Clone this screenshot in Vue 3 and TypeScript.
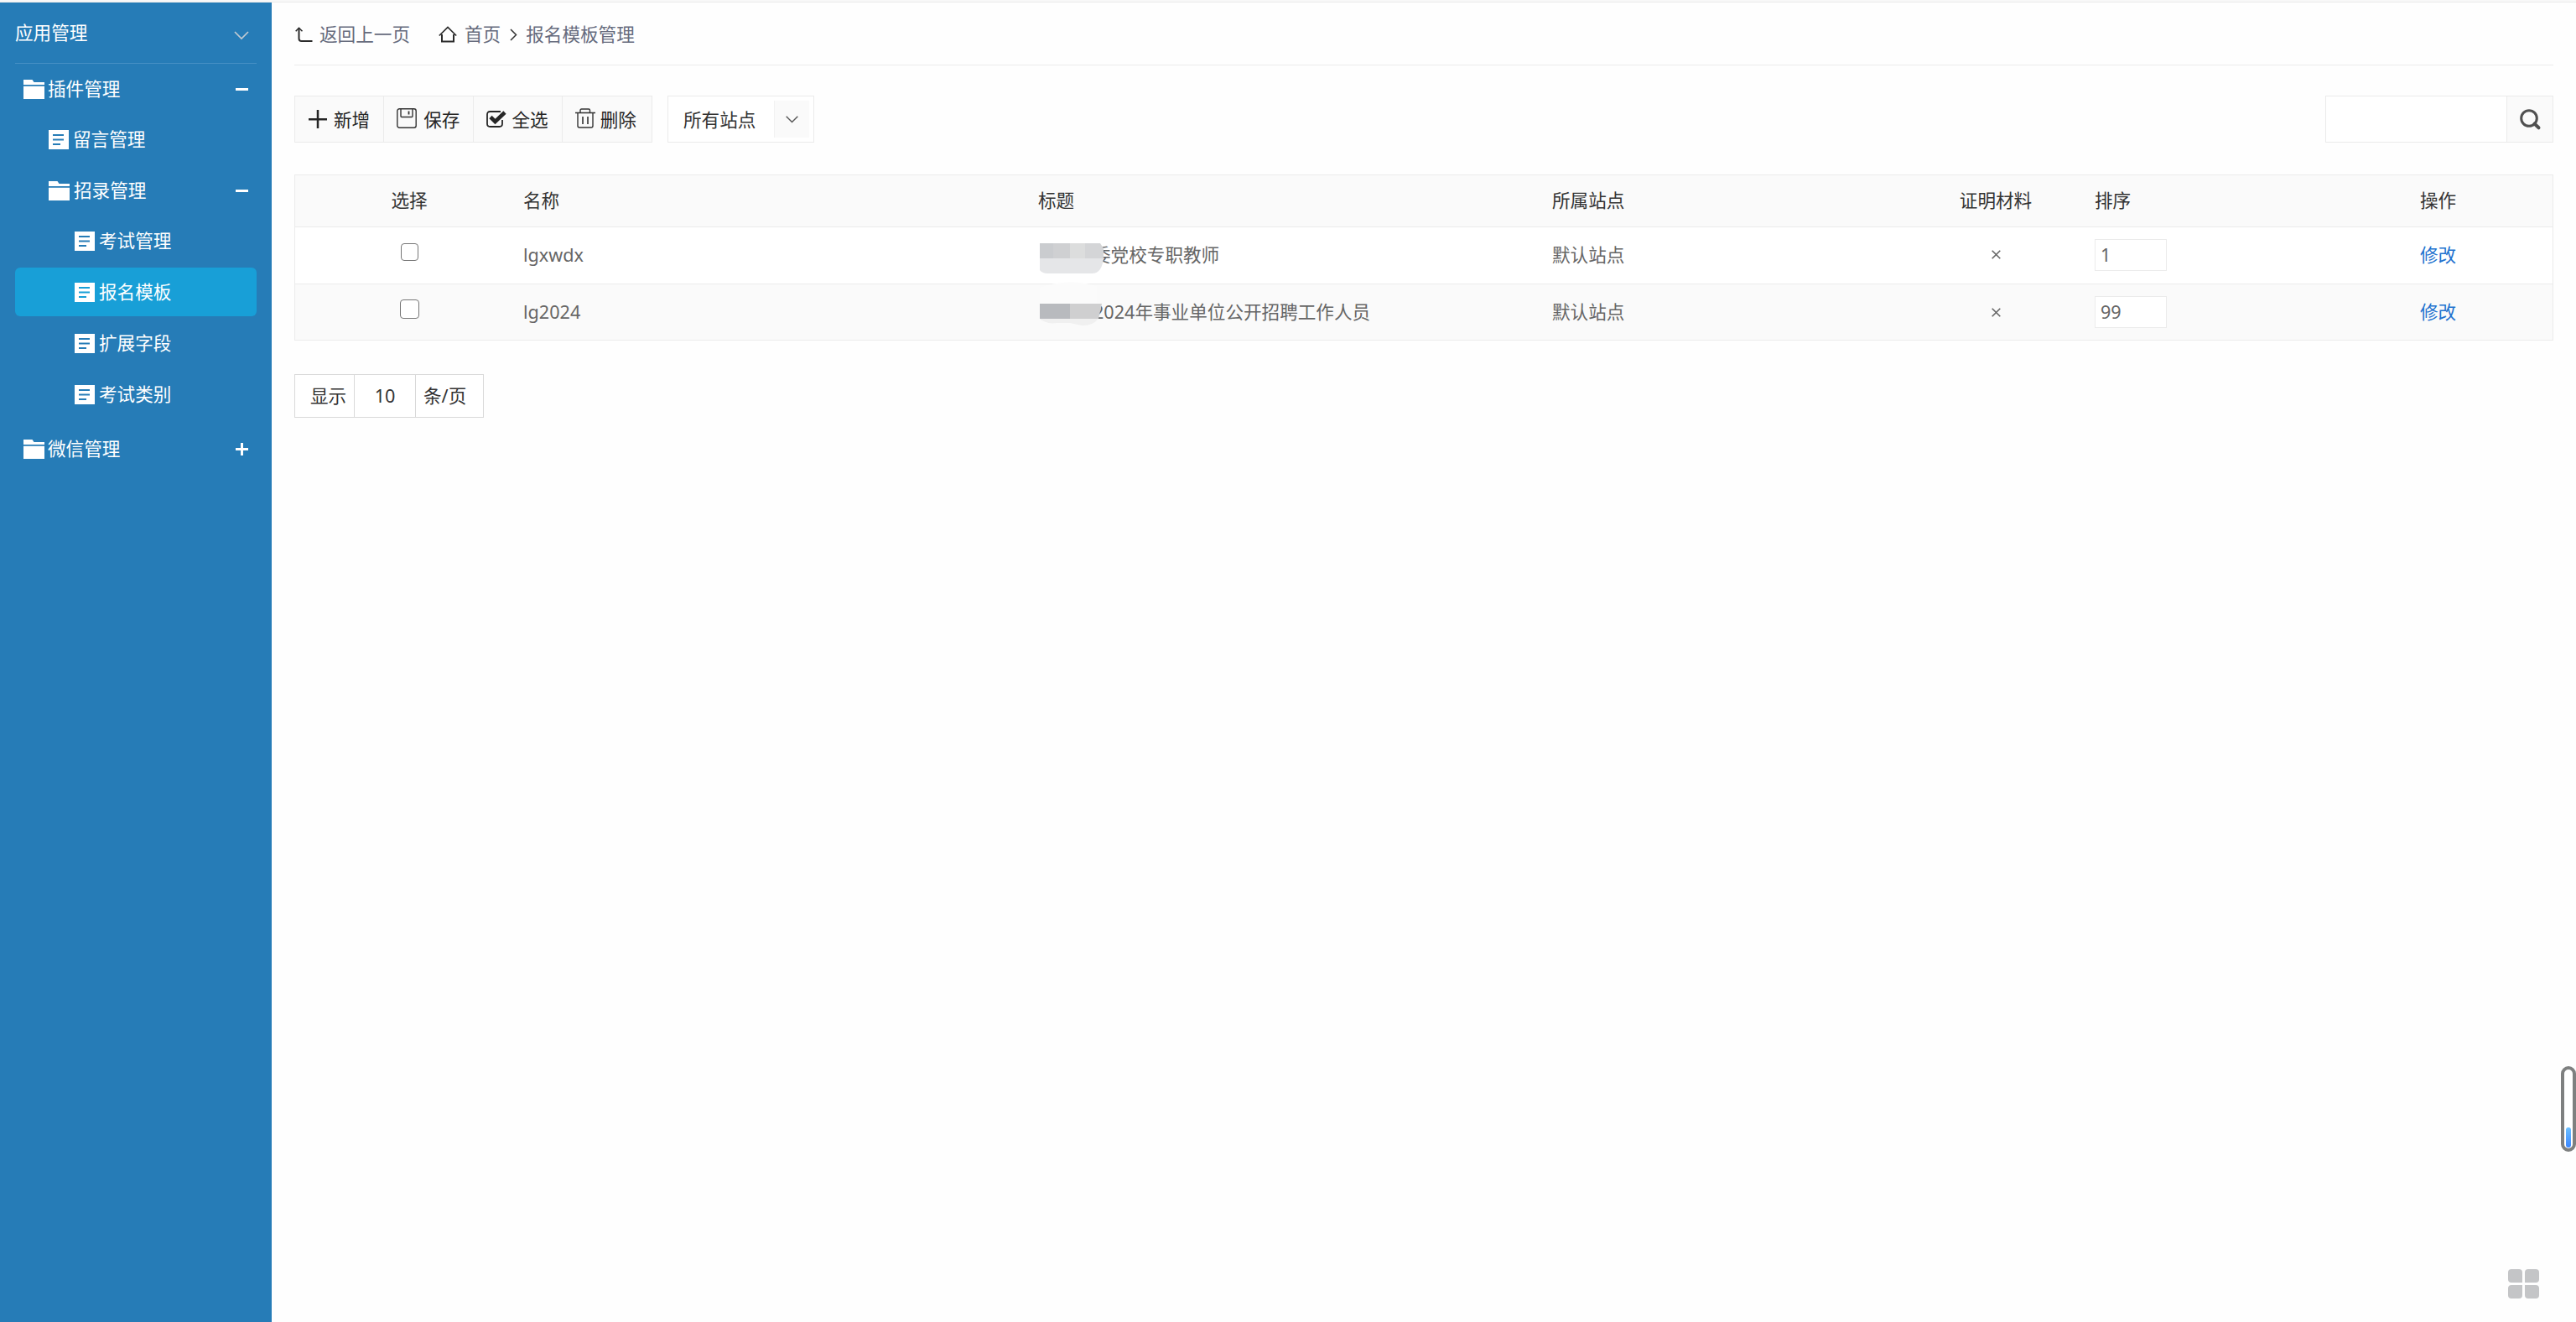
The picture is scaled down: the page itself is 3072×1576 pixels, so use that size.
<script setup lang="ts">
import { ref } from 'vue'

interface MenuItem {
  label: string
  kind: 'folder' | 'doc'
  level: 1 | 2 | 3
  gap: 's' | 'm' | 'l' | 'xl'
  toggle?: 'minus' | 'plus'
  active?: boolean
}

interface Row {
  name: string
  title: string
  site: string
  sort: string
}

const menu: MenuItem[] = [
  { label: '插件管理', kind: 'folder', level: 1, gap: 's', toggle: 'minus' },
  { label: '留言管理', kind: 'doc', level: 2, gap: 'm' },
  { label: '招录管理', kind: 'folder', level: 2, gap: 'l', toggle: 'minus' },
  { label: '考试管理', kind: 'doc', level: 3, gap: 'm' },
  { label: '报名模板', kind: 'doc', level: 3, gap: 'l', active: true },
  { label: '扩展字段', kind: 'doc', level: 3, gap: 'l' },
  { label: '考试类别', kind: 'doc', level: 3, gap: 'l' },
  { label: '微信管理', kind: 'folder', level: 1, gap: 'xl', toggle: 'plus' },
]

const rows = ref<Row[]>([
  { name: 'lgxwdx', title: '委党校专职教师', site: '默认站点', sort: '1' },
  { name: 'lg2024', title: '2024年事业单位公开招聘工作人员', site: '默认站点', sort: '99' },
])
</script>

<template>
  <div class="page">
    <div class="tabstrip"></div>
    <div class="body">
      <aside class="sidebar">
        <div class="side-head">
          <span>应用管理</span>
          <svg class="side-chev" width="18" height="11" viewBox="0 0 18 11"><path d="M1 1 L9 9 L17 1" fill="none" stroke="#c3cbd2" stroke-width="1.7" /></svg>
        </div>
        <div
          v-for="m in menu"
          :key="m.label"
          class="item"
          :class="['lv' + m.level, 'gap-' + m.gap, { active: m.active }]"
        >
          <svg v-if="m.kind === 'folder'" class="ico" width="25" height="23" viewBox="0 0 25 23">
            <path d="M0 0h10.5l2 3H25v3H0z M0 7.7h25V23H0z" fill="#fff" />
          </svg>
          <svg v-else class="ico" width="24" height="23" viewBox="0 0 24 23">
            <path fill-rule="evenodd" d="M0 0h24v23H0z M5 5v2h13V5z M5 10.5v2h13v-2z M5 16v2h9v-2z" fill="#fff" />
          </svg>
          <span class="label">{{ m.label }}</span>
          <svg v-if="m.toggle" class="toggle" width="15" height="15" viewBox="0 0 15 15">
            <path d="M0 7.5h15" stroke="#fff" stroke-width="3" />
            <path v-if="m.toggle === 'plus'" d="M7.5 0v15" stroke="#fff" stroke-width="3" />
          </svg>
        </div>
      </aside>

      <main class="main">
        <nav class="crumbs">
          <svg class="c-back" width="21" height="19" viewBox="0 0 21 19" fill="none" stroke="#2b2b2b"><path d="M4.5 1.5V14q0 3 3 3H20.500" stroke-width="2" /><path d="M.7 5.200 4.500 1.300 8.500 5.200" stroke-width="1.6" /></svg>
          <span>返回上一页</span>
          <svg class="c-home" width="22" height="20" viewBox="0 0 22 20" fill="none" stroke="#2b2b2b"><path d="M.8 11.500 11 1.500 21.200 11.500" stroke-width="1.7" /><path d="M4 10V18.500H18V10" stroke-width="2" /></svg>
          <span>首页</span>
          <svg class="c-sep" width="9" height="15" viewBox="0 0 9 15"><path d="M1 1 7.500 7.500 1 14" fill="none" stroke="#333" stroke-width="1.5" /></svg>
          <span>报名模板管理</span>
        </nav>

        <div class="toolbar">
          <div class="btns">
            <button class="btn b1">
              <svg width="22" height="22" viewBox="0 0 22 22"><path d="M0 11.300h22M11 0v22" stroke="#262626" stroke-width="2.500" /></svg>
              <span>新增</span>
            </button>
            <button class="btn b2">
              <svg width="24" height="24" viewBox="0 0 24 24" fill="none" stroke="#333" stroke-width="1.400"><rect x=".8" y=".8" width="22.400" height="22.400" rx="2.500" /><path d="M5 1v8.500q0 1 1 1h12q1 0 1-1V1" /><path d="M14.500 3.500v4" stroke-width="1.800" /></svg>
              <span>保存</span>
            </button>
            <button class="btn b3">
              <svg width="24" height="22" viewBox="0 0 24 22" fill="none" stroke="#262626"><path d="M17 2H4.500Q1 2 1 5.500v11Q1 20 4.500 20h11Q19 20 19 16.500V12" stroke-width="1.800" /><path d="M5 8.500 10.500 14 22 3" stroke-width="4.600" /></svg>
              <span>全选</span>
            </button>
            <button class="btn b4">
              <svg width="24" height="24" viewBox="0 0 24 24" fill="none" stroke="#333" stroke-width="1.400"><path d="M0 5.500h24M6 5V2.500Q6 1 7.500 1h8.500q1.500 0 1.500 1.500V5M3 5.500V21q0 2 2 2h14q2 0 2-2V5.500" /><path d="M9 10v9M15 10v9" stroke-width="1.600" /></svg>
              <span>删除</span>
            </button>
          </div>
          <div class="select">
            <span>所有站点</span>
            <div class="sel-arrow"><svg width="15" height="9" viewBox="0 0 15 9"><path d="M.7.700 7.500 7.500 14.300.7" fill="none" stroke="#555" stroke-width="1.400" /></svg></div>
          </div>
          <div class="search">
            <div class="search-input"></div>
            <div class="search-btn">
              <svg width="25" height="25" viewBox="0 0 25 25" fill="none" stroke="#505050"><circle cx="11" cy="11" r="9.300" stroke-width="3" /><path d="M17.500 17.500 22.500 22.300" stroke-width="4" stroke-linecap="round" /></svg>
            </div>
          </div>
        </div>

        <section class="table">
          <div class="tr th">
            <div class="ctr">选择</div>
            <div>名称</div>
            <div>标题</div>
            <div>所属站点</div>
            <div class="ctr">证明材料</div>
            <div>排序</div>
            <div class="ctr">操作</div>
          </div>
          <div v-for="(r, i) in rows" :key="r.name" class="tr" :class="'r' + i">
            <div class="ctr"><span class="check"></span></div>
            <div><span class="name">{{ r.name }}</span></div>
            <div class="title">
              <span>{{ r.title }}</span>
              <svg v-if="i === 0" class="mask" width="76" height="36" viewBox="0 0 76 36">
                <path d="M0 0H72L76 6V18H0z" fill="#d4d5d7" />
                <path d="M0 0H16V18H0z" fill="#cacccf" /><path d="M16 0H36V18H16z" fill="#cfd0d2" /><path d="M36 0H54V18H36z" fill="#dcdddd" />
                <path d="M0 18H76Q74 36 62 36H8Q2 35 0 32z" fill="#e5e6e8" />
              </svg>
              <svg v-else class="mask low" width="74" height="52" viewBox="0 0 74 52">
                <path d="M0 6Q35-6 68 4V25H0z" fill="#fbfbfb" />
                <path d="M0 25H36V43H0z" fill="#b8babe" /><path d="M36 25H74L70 43H36z" fill="#cfcfd0" />
                <path d="M0 43H70Q62 52 50 51L36 48H20Q8 50 0 43z" fill="#f0f0f0" />
              </svg>
            </div>
            <div>{{ r.site }}</div>
            <div class="ctr"><svg width="11" height="11" viewBox="0 0 11 11"><path d="M.7.700 10.300 10.300M10.300.7.700 10.300" stroke="#666" stroke-width="1.600" /></svg></div>
            <div><span class="sort">{{ r.sort }}</span></div>
            <div class="ctr"><a class="link">修改</a></div>
          </div>
        </section>

        <div class="pager">
          <span class="p1">显示</span>
          <span class="p2">10</span>
          <span class="p3">条/页</span>
        </div>
      </main>
    </div>

    <div class="gauge"><i></i></div>
    <div class="apps"><i></i><i></i><i></i><i></i></div>
  </div>
</template>

<style>
body {
  background: #fefefe;
}
</style>

<style scoped>
.page {
  position: relative;
  box-sizing: border-box;
  width: 3072px;
  height: 1576px;
  overflow: hidden;
  display: flex;
  flex-direction: column;
  background: #fefefe;
  font-family: 'Noto Sans', 'Noto Sans CJK SC', sans-serif;
  font-size: 21.6px;
  line-height: 30px;
  color: #333;
  white-space: nowrap;
}
.page * { box-sizing: border-box; }
svg { display: block; flex: none; overflow: visible; }
.tabstrip { height: 3px; flex: none; background: #f8f8f8; border-bottom: 1px solid #ebebeb; }
.body { display: flex; flex: 1; min-height: 0; }

.sidebar { width: 324px; flex: none; background: #267cb7; color: #fff; padding: 0 18px; }
.side-head {
  height: 73px;
  border-bottom: 1px solid #4790c5;
  display: flex;
  align-items: center;
  justify-content: space-between;
  padding-right: 9px;
}
.side-chev { margin-top: 6px; }
.item { height: 58px; display: flex; align-items: center; border-radius: 6px; padding-right: 10px; }
.item.active { background: #189fd7; }
.gap-s { margin-top: 1px; }
.gap-m { margin-top: 2px; }
.gap-l { margin-top: 3px; }
.gap-xl { margin-top: 7px; }
.lv1 { padding-left: 10px; }
.lv2 { padding-left: 40px; }
.lv3 { padding-left: 71px; }
.label { margin-left: 5px; }
.lv1 .label { margin-left: 4px; }
.toggle { margin-left: auto; }

.main { flex: 1; padding: 0 27px; display: flex; flex-direction: column; }
.crumbs {
  height: 75px;
  flex: none;
  border-bottom: 1px solid #ebebeb;
  display: flex;
  align-items: center;
  color: #666b7d;
  padding-top: 1px;
}
.c-back { margin: 1px 8px 0 1px; }
.c-home { margin: 1px 9px 0 34px; }
.c-sep { margin: 1px 10px 0 11px; }

.toolbar { height: 56px; flex: none; margin-top: 36px; display: flex; }
.btns { display: flex; border: 1px solid #ebebeb; background: #fafafa; width: 427px; }
.btn {
  width: 106.500px;
  display: flex;
  align-items: center;
  padding: 0;
  border: 0;
  border-right: 1px solid #ebebeb;
  background: none;
  font: inherit;
  color: #262626;
}
.btn:last-child { border-right: 0; }
.btn span { margin: 2px 0 0 8px; }
.b1 { padding-left: 16px; }
.b2 { padding-left: 15px; }
.b3 { padding-left: 15px; }
.b4 { padding-left: 15px; }
.b3 span { margin-left: 7px; }
.b4 span { margin-left: 6px; }
.b2 svg { margin-top: -2px; }
.b4 svg { margin-top: -2px; }
.select {
  margin-left: 18px;
  width: 175px;
  border: 1px solid #ebebeb;
  background: #fff;
  display: flex;
  align-items: center;
  padding: 0 5px 0 18px;
  justify-content: space-between;
}
.select > span { margin-top: 2px; }
.sel-arrow {
  width: 42px;
  height: 44px;
  background: #fafafa;
  border-left: 1px solid #f2f2f2;
  display: flex;
  align-items: center;
  justify-content: center;
}
.search { margin-left: auto; width: 272px; border: 1px solid #ebebeb; display: flex; background: #fff; }
.search-input { flex: 1; }
.search-btn {
  width: 55px;
  border-left: 1px solid #ebebeb;
  background: #fafafa;
  display: flex;
  align-items: center;
  justify-content: center;
}

.table { margin-top: 38px; flex: none; border: 1px solid #ebebeb; border-bottom: 0; }
.tr {
  height: 68px;
  display: grid;
  grid-template-columns: 272px 614px 613px 411px 236px 273px 1fr;
  border-bottom: 1px solid #ebebeb;
  color: #666;
  background: #fff;
}
.tr > div { display: flex; align-items: center; }
.tr > .ctr { justify-content: center; }
.th { height: 62px; background: #fafafa; color: #333; padding-bottom: 2px; }
.r0 { padding-bottom: 2px; }
.r1 { height: 67px; background: #fafafa; }
.check { width: 23px; height: 23px; border: 1.500px solid #767676; border-radius: 4px; background: #fff; margin-top: -8px; }
.r0 .check { width: 21px; height: 21px; margin-top: -6px; }
.title { position: relative; padding-left: 65px; }
.r1 .title { padding-left: 66px; }
.mask { position: absolute; left: 2px; top: 19px; }
.mask.low { top: -2px; }
.sort {
  width: 86px;
  height: 38px;
  border: 1px solid #ebebeb;
  background: #fff;
  padding-left: 6px;
  line-height: 36px;
}
.link { color: #2272cf; }

.pager { margin-top: 40px; width: 226px; height: 52px; border: 1px solid #d9d9d9; display: flex; background: #fff; }
.pager span { display: flex; align-items: center; }
.p1 { width: 71px; padding-left: 18px; border-right: 1px solid #d9d9d9; }
.p2 { width: 73px; justify-content: center; border-right: 1px solid #d9d9d9; }
.p3 { padding-left: 9px; }

.gauge {
  position: absolute;
  left: 3054px;
  top: 1271px;
  width: 18px;
  height: 102px;
  border: 4px solid #7e8080;
  border-radius: 9px;
  background: #fff;
}
.gauge i { position: absolute; left: 2px; bottom: 1px; width: 6px; height: 24px; border-radius: 3px; background: linear-gradient(#6cc0ff, #3a86ff); }
.apps {
  position: absolute;
  left: 2991px;
  top: 1513px;
  display: grid;
  grid-template-columns: 17px 17px;
  grid-auto-rows: 16px;
  gap: 3px;
}
.apps i { background: #c4c5c7; border-radius: 4px; }
.apps i:nth-child(1) { border-bottom-right-radius: 0; }
.apps i:nth-child(2) { border-bottom-left-radius: 0; }
.apps i:nth-child(3) { border-top-right-radius: 0; }
.apps i:nth-child(4) { border-top-left-radius: 0; }
</style>
